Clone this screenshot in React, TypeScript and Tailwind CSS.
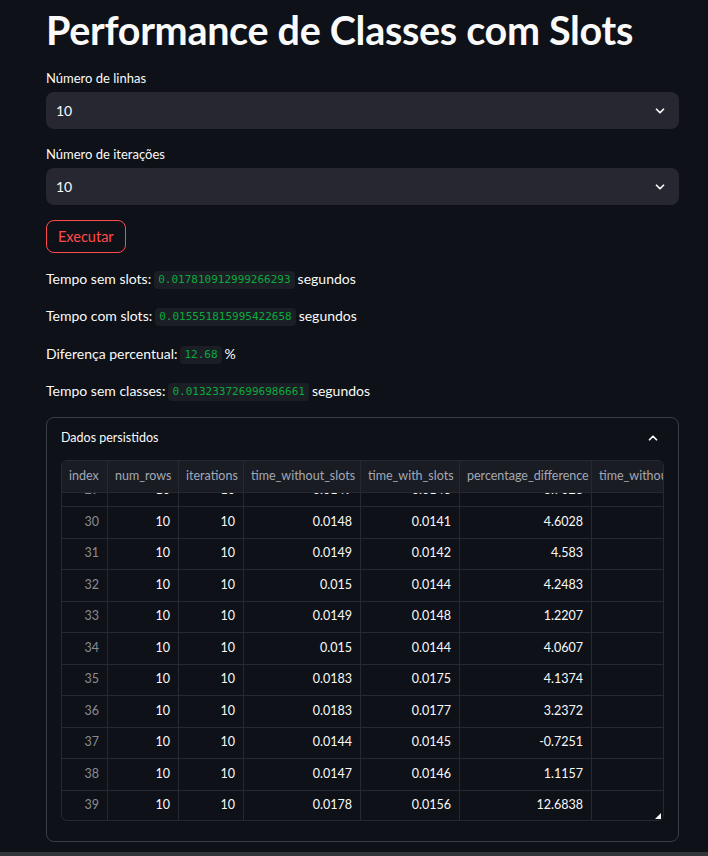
import React from "react";

const rows = [
  ["29", "10", "10", "0.0149", "0.0143", "3.7028"],
  ["30", "10", "10", "0.0148", "0.0141", "4.6028"],
  ["31", "10", "10", "0.0149", "0.0142", "4.583"],
  ["32", "10", "10", "0.015", "0.0144", "4.2483"],
  ["33", "10", "10", "0.0149", "0.0148", "1.2207"],
  ["34", "10", "10", "0.015", "0.0144", "4.0607"],
  ["35", "10", "10", "0.0183", "0.0175", "4.1374"],
  ["36", "10", "10", "0.0183", "0.0177", "3.2372"],
  ["37", "10", "10", "0.0144", "0.0145", "-0.7251"],
  ["38", "10", "10", "0.0147", "0.0146", "1.1157"],
  ["39", "10", "10", "0.0178", "0.0156", "12.6838"],
];

const cols = [
  { name: "index", w: "w-[46px]" },
  { name: "num_rows", w: "w-[71px]" },
  { name: "iterations", w: "w-[65px]" },
  { name: "time_without_slots", w: "w-[117px]" },
  { name: "time_with_slots", w: "w-[99px]" },
  { name: "percentage_difference", w: "w-[132px]" },
  { name: "time_without_classes", w: "w-[80px]" },
];

function Chevron({ up = false }: { up?: boolean }) {
  return (
    <svg width="14" height="14" viewBox="0 0 24 24" fill="none" stroke="#fafafa" strokeWidth="3" strokeLinecap="round" strokeLinejoin="round">
      {up ? <path d="M6 15l6-6 6 6" /> : <path d="M6 9l6 6 6-6" />}
    </svg>
  );
}

function Select({ label }: { label: string }) {
  return (
    <div className="flex flex-col">
      <div className="text-[13px] leading-[20px] mb-[4px]">{label}</div>
      <div className="h-[37px] rounded-lg bg-[#262730] flex items-center justify-between pl-[10px] pr-[12px]">
        <span className="text-[14px]">10</span>
        <Chevron />
      </div>
    </div>
  );
}

function Code({ children }: { children: React.ReactNode }) {
  return (
    <span className="inline-block bg-[#1c1e26] text-[#09ab3b] rounded px-[4px] text-[11px] leading-[18px] mx-[3px] align-[1px]" style={{ fontFamily: '"DejaVu Sans Mono", monospace' }}>
      {children}
    </span>
  );
}

export default function App() {
  return (
    <div className="min-h-[856px] w-full bg-[#0e1117] text-[#fafafa] flex flex-col" style={{ fontFamily: 'Lato, "Noto Sans", sans-serif' }}>
      <div className="flex-1 pl-[46px] pr-[29px] pt-[8px] flex flex-col">
        <h1 className="text-[39.5px] font-bold leading-[44px] tracking-[-0.3px]">Performance de Classes com Slots</h1>
        <div className="mt-[16px]">
          <Select label="Número de linhas" />
        </div>
        <div className="mt-[15px]">
          <Select label="Número de iterações" />
        </div>
        <div className="mt-[15px]">
          <button className="h-[33px] px-[11px] rounded-lg border border-[#ff4b4b] text-[#ff4b4b] text-[14.5px] bg-transparent">Executar</button>
        </div>
        <div className="mt-[15.5px] flex flex-col gap-[17.5px] text-[14px] leading-[19px]">
          <div>Tempo sem slots:<Code>0.017810912999266293</Code>segundos</div>
          <div>Tempo com slots:<Code>0.015551815995422658</Code>segundos</div>
          <div>Diferença percentual:<Code>12.68</Code>%</div>
          <div>Tempo sem classes:<Code>0.013233726996986661</Code>segundos</div>
        </div>
        <div className="mt-[16px] rounded-lg border border-[#3b3d45] px-[14px] pt-[10px] pb-[20px]">
          <div className="flex items-center justify-between h-[20px] pr-[4px]">
            <span className="text-[12.5px]">Dados persistidos</span>
            <Chevron up />
          </div>
          <div className="relative mt-[12px] rounded-md border border-[#262932] overflow-hidden h-[361px]">
            <div className="flex h-[32px] bg-[#1a1c24] border-b border-[#262932]">
              {cols.map((c, i) => (
                <div key={i} className={`${c.w} shrink-0 border-r border-[#262932] flex items-center px-[7px] text-[12.5px] text-[#a3a8b4] whitespace-nowrap overflow-hidden`}>
                  {c.name}
                </div>
              ))}
            </div>
            <div className="h-[328px] overflow-hidden">
              <div className="mt-[-17.5px]">
                {rows.map((r, ri) => (
                  <div key={ri} className="flex h-[31.5px] border-b border-[#262932]">
                    {cols.map((c, ci) => (
                      <div key={ci} className={`${c.w} shrink-0 border-r border-[#262932] flex items-center justify-end px-[8px] text-[12.5px] whitespace-nowrap overflow-hidden ${ci === 0 ? "text-[#8a8c94]" : "text-[#fafafa]"}`}>
                        {ci < 6 ? r[ci] : ""}
                      </div>
                    ))}
                  </div>
                ))}
              </div>
            </div>
            <svg className="absolute right-[2px] bottom-[1px]" width="6" height="6" viewBox="0 0 6 6">
              <path d="M6 0V6H0Z" fill="#fafafa" />
            </svg>
          </div>
        </div>
      </div>
      <div className="h-[4px] bg-[#33363b]" />
    </div>
  );
}
